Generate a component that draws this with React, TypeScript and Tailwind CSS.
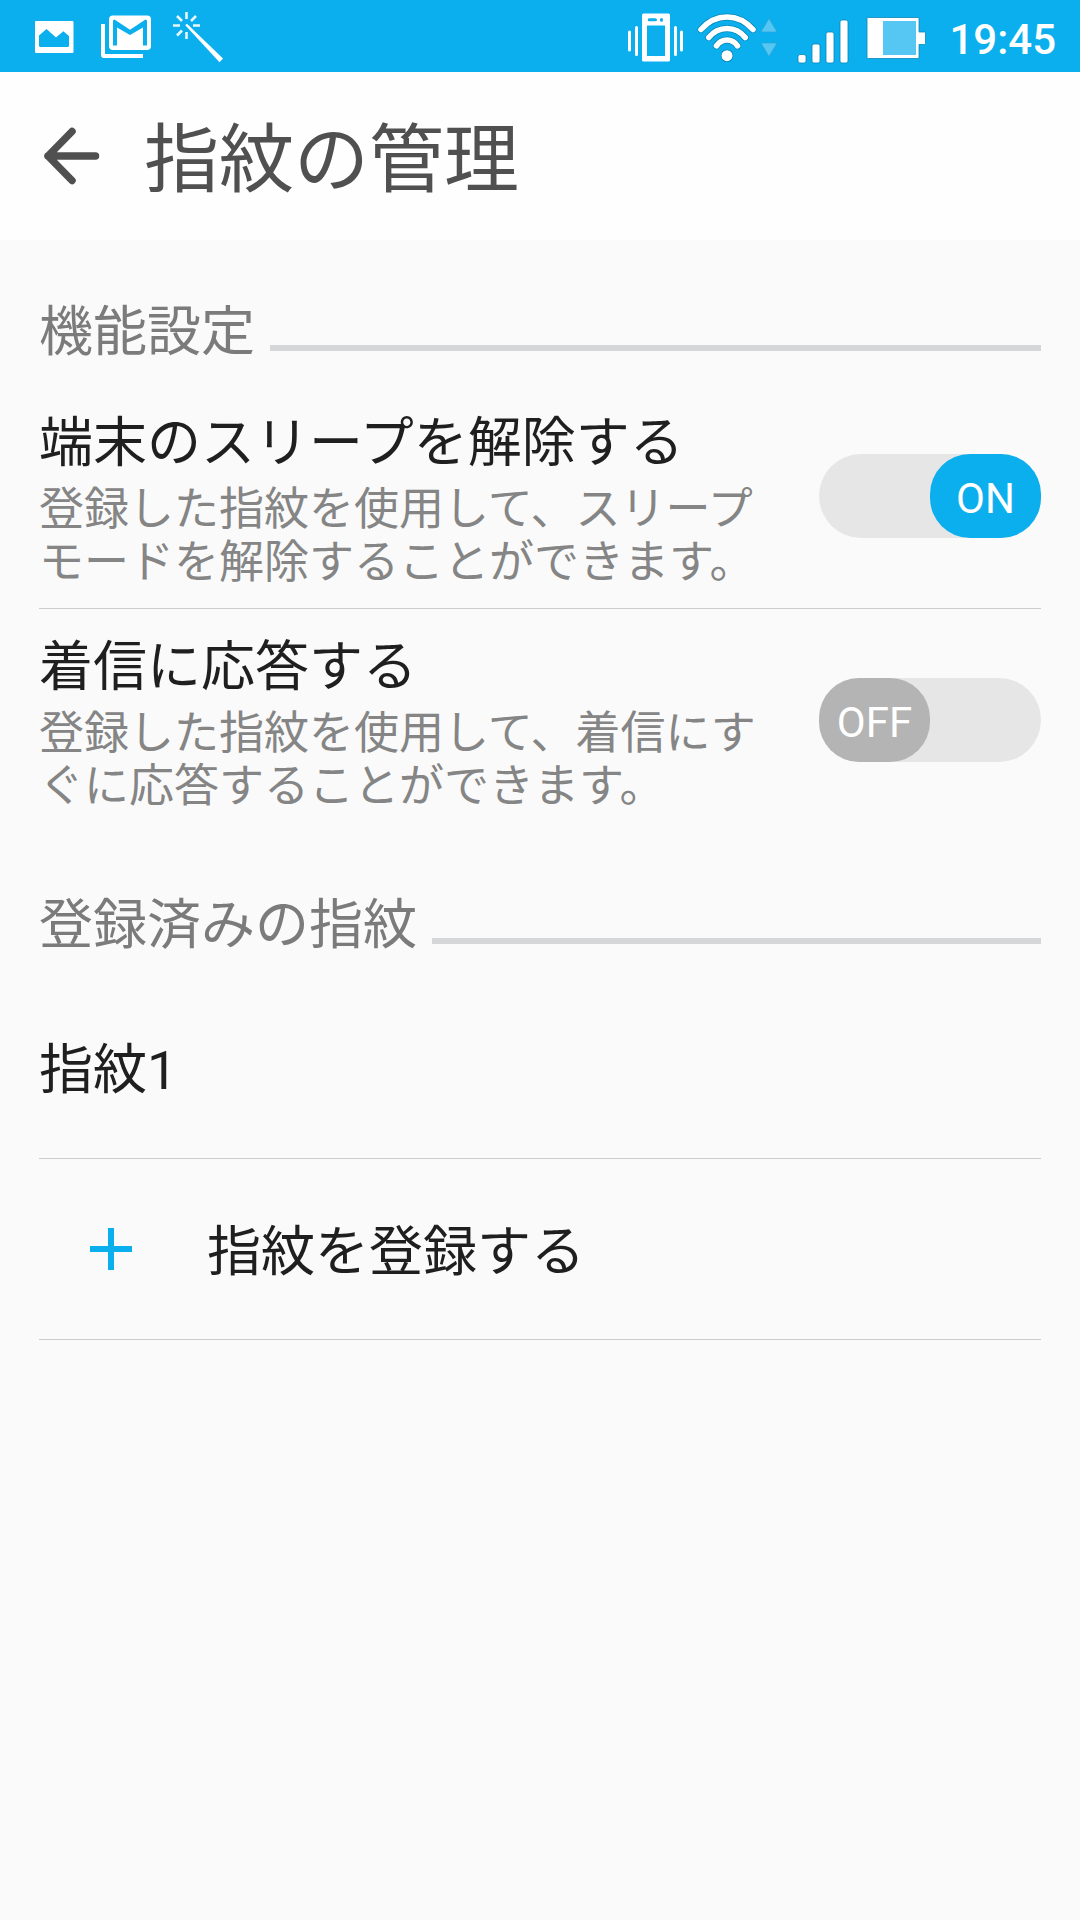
import React, { useState } from 'react';

interface ToggleProps {
  checked: boolean;
  onChange: () => void;
}

interface SettingRowProps extends ToggleProps {
  title: string;
  lines: string[];
}

const NotificationIcons = () => (
  <div className="flex items-center">
    <svg width="39" height="72" viewBox="35 0 39 72" className="ml-[35px]">
      <path
        fill="#fff"
        fillRule="evenodd"
        d="M36 21h36.500a1 1 0 0 1 1 1v30a1 1 0 0 1-1 1H36a1 1 0 0 1-1-1V22a1 1 0 0 1 1-1zM39 35.500V45.500Q39 47 40.500 47H67.500Q69 47 69 45.500V36L63.300 31.300 56 37.500 46.500 29z"
      />
    </svg>
    <svg width="50" height="72" viewBox="101 0 50 72" className="ml-[27px]">
      <path fill="#fff" d="M101 24h4v30h38v4h-39q-3 0-3-3z" />
      <rect x="109" y="15.500" width="42" height="34.500" rx="4" fill="#fff" />
      <path fill="#0cafee" d="M113 20.500v25h4V27.500l13 7.500 13-7.500v18h4v-25l-1.500-1L130 29.800 114.500 19.500z" />
    </svg>
    <svg width="52" height="72" viewBox="172 0 52 72" className="ml-[21px]">
      <g stroke="#e6f7fe" strokeWidth="2.600">
        <path d="M186.500 12v7M186.500 32v7M173 25.500h7M193 25.500h7M177 16l5 5M196 16l-5 5M177 35.500l5-5" />
      </g>
      <path fill="#fff" d="M185.500 25.500q0-2 2-1.200L223 58.500l-3.500 3.700z" />
    </svg>
  </div>
);

const SystemIcons = () => (
  <div className="flex items-center">
    <svg width="57" height="72" viewBox="627 0 57 72">
      <path
        fill="#fff"
        fillRule="evenodd"
        d="M643.500 13.500h25q1.500 0 1.500 1.500v45q0 1.500-1.500 1.500h-25q-1.500 0-1.500-1.500V15q0-1.500 1.500-1.500zM647 25.500v30.500h18V25.500z"
      />
      <path stroke="#0cafee" strokeWidth="3" strokeLinecap="round" d="M649.200 19.800h6.300M661.500 19.500v.8" />
      <path
        stroke="#fff"
        strokeWidth="3"
        strokeLinecap="round"
        d="M629.500 32v18M636.500 27.500v27M675.500 27.500v27M681.500 32v18"
      />
    </svg>
    <svg width="60" height="72" viewBox="697 0 60 72" fill="none" className="ml-[13px]">
      <g stroke="#0786b8" strokeWidth="7" strokeLinecap="round">
        <path d="M701 29.500Q712 17 727 17T753 29.500M708.800 37.500Q716 28.500 727 28.500T745.200 37.500M716.500 45.800Q720.500 40 727 40T737.500 45.800" />
      </g>
      <circle cx="727" cy="55.700" r="6.300" fill="#0786b8" />
      <g stroke="#fff" strokeWidth="5.600" strokeLinecap="round">
        <path d="M701 29.500Q712 17 727 17T753 29.500M708.800 37.500Q716 28.500 727 28.500T745.200 37.500M716.500 45.800Q720.500 40 727 40T737.500 45.800" />
      </g>
      <circle cx="727" cy="55.700" r="5.500" fill="#fff" />
    </svg>
    <svg width="16" height="72" viewBox="761.500 0 16 72" className="ml-[4px]">
      <path fill="#56c7f3" stroke="#2aa5d6" strokeWidth=".7" d="M769.500 18.500l7.500 12.500q0 1-1 1h-13q-1 0-1-1zM769.500 56.500l7.500-12.500q0-1-1-1h-13q-1 0-1 1z" />
    </svg>
    <svg width="52" height="72" viewBox="797 0 52 72" className="ml-[20px]">
      <g fill="#fff" stroke="#0786b8" strokeWidth=".8">
        <rect x="798" y="54.500" width="8" height="8.500" rx="2" />
        <rect x="812" y="44" width="8" height="19" rx="2" />
        <rect x="826" y="32" width="8" height="31" rx="2" />
        <rect x="840" y="20" width="8" height="43" rx="2" />
      </g>
    </svg>
    <svg width="60" height="72" viewBox="866 0 60 72" className="ml-[17px]">
      <path fill="#fff" stroke="#0786b8" strokeWidth=".8" d="M868 17.500h50q1 0 1 1V32h5.500q1 0 1 1v10.500q0 1-1 1H919v13q0 1-1 1h-50q-1 0-1-1v-39q0-1 1-1z" />
      <rect x="883" y="21" width="33" height="34" fill="#56c7f3" />
    </svg>
    <span className="ml-[23px] mr-[24px] pt-[8px] text-[42px] font-medium leading-[72px]">19:45</span>
  </div>
);

const Toggle = ({ checked, onChange }: ToggleProps) => (
  <button
    role="switch"
    aria-checked={checked}
    onClick={onChange}
    className={`mt-[69px] flex h-[84px] w-[222px] shrink-0 rounded-full bg-[#e6e6e6] ${checked ? 'justify-end' : 'justify-start'}`}
  >
    <span
      className={`flex h-[84px] w-[111px] items-center justify-center rounded-[40px] pt-[6px] text-[42px] leading-none text-white ${
        checked ? 'bg-[#0cafee]' : 'bg-[#b4b4b4]'
      }`}
    >
      {checked ? 'ON' : 'OFF'}
    </span>
  </button>
);

const SectionHeader = ({ label }: { label: string }) => (
  <div className="flex h-[145px] pt-[60px]">
    <h2 className="text-[54px] leading-[66px] text-[#7b7b7b]">{label}</h2>
    <div className="ml-[15px] mt-[45px] h-[6px] flex-1 bg-[#d5d6d7]" />
  </div>
);

const SettingRow = ({ title, lines, checked, onChange }: SettingRowProps) => (
  <div className="flex h-[223px] justify-between">
    <div className="pt-[26px]">
      <h3 className="text-[54px] leading-[66px] text-[#1f1f1f]">{title}</h3>
      <p className="mt-[6px] text-[45px] leading-[53px] text-[#858585]">
        {lines.map((line) => (
          <span key={line} className="block whitespace-nowrap">{line}</span>
        ))}
      </p>
    </div>
    <Toggle checked={checked} onChange={onChange} />
  </div>
);

const App = () => {
  const [wakeUp, setWakeUp] = useState(true);
  const [answerCalls, setAnswerCalls] = useState(false);

  return (
    <div className="h-[1920px] w-[1080px] overflow-hidden bg-[#fafafa] font-[Roboto,'Noto_Sans_CJK_JP',sans-serif]">
      <div className="flex h-[72px] justify-between bg-[#0cafee] text-white">
        <NotificationIcons />
        <SystemIcons />
      </div>

      <header className="flex h-[168px] items-center bg-[#fefefe]">
        <button aria-label="戻る" className="ml-[43px]">
          <svg width="58" height="60" viewBox="0 0 58 60" fill="none" stroke="#505050" strokeWidth="7.500" strokeLinecap="round" strokeLinejoin="round">
            <path d="M52.500 30H5M29 5.500L5 30l24 24.500" />
          </svg>
        </button>
        <h1 className="ml-[43px] pt-[7px] text-[75px] leading-[90px] text-[#505050]">指紋の管理</h1>
      </header>

      <main className="mx-[39px]">
        <SectionHeader label="機能設定" />
        <SettingRow
          title="端末のスリープを解除する"
          lines={['登録した指紋を使用して、スリープ', 'モードを解除することができます。']}
          checked={wakeUp}
          onChange={() => setWakeUp(!wakeUp)}
        />
        <div className="h-px bg-[#cdcdcd]" />
        <div className="pb-px">
          <SettingRow
            title="着信に応答する"
            lines={['登録した指紋を使用して、着信にす', 'ぐに応答することができます。']}
            checked={answerCalls}
            onChange={() => setAnswerCalls(!answerCalls)}
          />
        </div>
        <SectionHeader label="登録済みの指紋" />
        <div className="flex h-[180px] items-center pt-[5px] text-[54px] leading-[66px] text-[#1f1f1f]">指紋1</div>
        <div className="h-px bg-[#cdcdcd]" />
        <button className="flex h-[180px] w-full items-center text-left text-[54px] leading-[66px] text-[#1f1f1f]">
          <svg width="42" height="42" viewBox="0 0 42 42" className="ml-[51px]">
            <path fill="#0cafee" d="M18 0h6v18h18v6H24v18h-6V24H0v-6h18z" />
          </svg>
          <span className="ml-[75px] pt-[7px]">指紋を登録する</span>
        </button>
        <div className="h-px bg-[#cdcdcd]" />
      </main>
    </div>
  );
};

export default App;
